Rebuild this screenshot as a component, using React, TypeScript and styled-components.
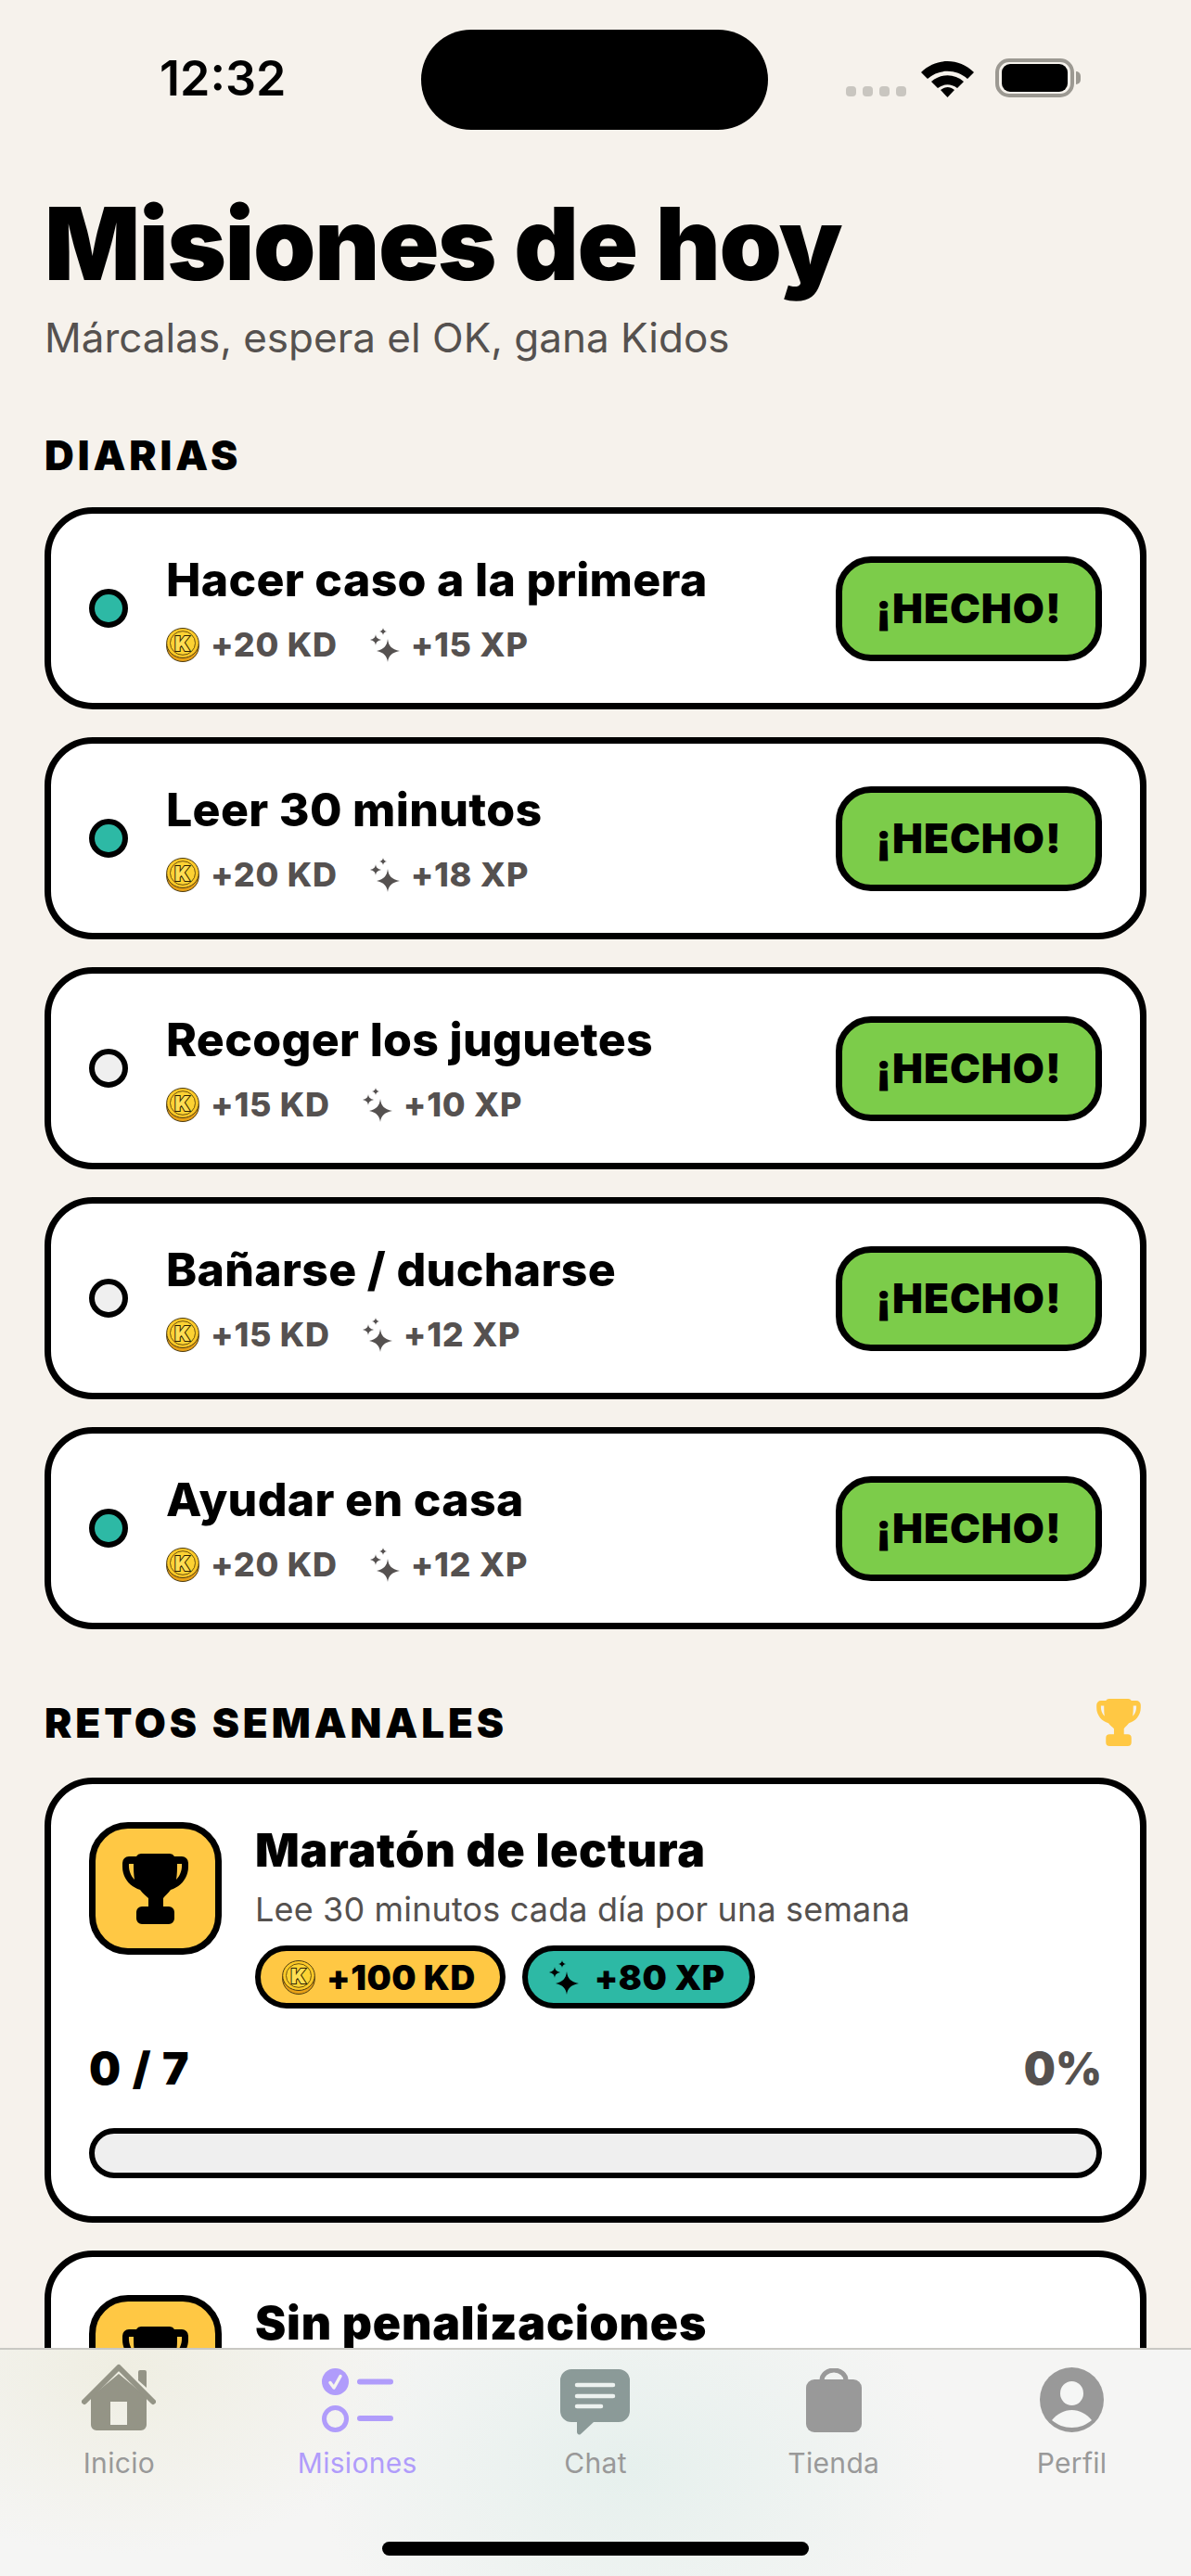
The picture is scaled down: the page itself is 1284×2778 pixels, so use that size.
import React from 'react'
import styled, { createGlobalStyle } from 'styled-components'

const font = `Inter, "Noto Sans", "Liberation Sans", sans-serif`

const missions = [
  { title: 'Hacer caso a la primera', kd: 20, xp: 15, done: true },
  { title: 'Leer 30 minutos', kd: 20, xp: 18, done: true },
  { title: 'Recoger los juguetes', kd: 15, xp: 10, done: false },
  { title: 'Bañarse / ducharse', kd: 15, xp: 12, done: false },
  { title: 'Ayudar en casa', kd: 20, xp: 12, done: true },
]

const Coin = () => (
  <CoinSvg viewBox="0 0 36 37">
    <ellipse cx="18" cy="20" rx="17.300" ry="16.500" fill="#e8a117" stroke="#4a3a12" strokeWidth="1" />
    <ellipse cx="18" cy="16.500" rx="17.300" ry="16" fill="#fdc927" stroke="#4a3a12" strokeWidth="1" />
    <ellipse cx="18" cy="16.500" rx="13.500" ry="12.800" fill="#fdd233" stroke="#6b5210" strokeWidth="1" />
    <text x="18" y="24.500" textAnchor="middle" fontFamily={font} fontSize="22" fontWeight="900" fill="#ffdf55" stroke="#2a1f05" strokeWidth="2" paintOrder="stroke">K</text>
  </CoinSvg>
)

const Sparkles = ({ color }: { color: string }) => (
  <SparkleSvg viewBox="0 0 32 37" fill={color}>
    <path d="M19 12c1 8 4 11 13 13-9 2-12 5-13 12-1-7-4-10-12-12 8-2 11-5 12-13z" />
    <path d="M6 7c.4 3.500 2 5 6 6-4 1-5.600 2.500-6 6-.4-3.500-2-5-6-6 4-1 5.600-2.500 6-6z" />
    <path d="M14 0c.3 2.300 1.300 3.300 4 4-2.700.7-3.700 1.700-4 4-.3-2.300-1.300-3.300-4-4 2.700-.7 3.700-1.700 4-4z" />
  </SparkleSvg>
)

const Trophy = ({ color, w, h }: { color: string; w: number; h: number }) => (
  <svg width={w} height={h} viewBox="0 0 71 76" fill={color}>
    <path
      fillRule="evenodd"
      d="M20 0H51a6 6 0 0 1 5 3H64a7 7 0 0 1 7 7V14C71 27 62 36 52 39 49 43 46 45 44 48V57H50a6 6 0 0 1 6 6V70a6 6 0 0 1-6 6H21a6 6 0 0 1-6-6V63a6 6 0 0 1 6-6H28V48C25 45 22 43 19 39 9 36 0 27 0 14V10a7 7 0 0 1 7-7H15a6 6 0 0 1 5-3ZM7 11C6.500 18 9 24 13 28 12 22 12 16 12 11ZM64 11C64.500 18 62 24 58 28 59 22 59 16 59 11Z"
    />
  </svg>
)

const HomeIcon = () => (
  <svg width="80" height="72" viewBox="0 0 80 72">
    <path d="M10 36 40 11 70 36V66a6 6 0 0 1-6 6H16a6 6 0 0 1-6-6Z M31 41V66H49V41Z" fill="#949486" fillRule="evenodd" />
    <path d="M3 41 40 4 77 41" fill="none" stroke="#949486" strokeWidth="6" strokeLinecap="round" strokeLinejoin="round" />
    <path d="M61 9a2 2 0 0 1 2-2h5a2 2 0 0 1 2 2V26L61 18Z" fill="#949486" />
  </svg>
)

const MissionIcon = () => (
  <svg width="77" height="69" viewBox="0 0 77 69">
    <circle cx="14.500" cy="14.500" r="14.500" fill="#b09cfb" />
    <path d="M9 15.500 13 21 20 8.500" fill="none" stroke="#f5f4ee" strokeWidth="3.500" strokeLinecap="round" strokeLinejoin="round" />
    <circle cx="14.500" cy="54.500" r="12" fill="none" stroke="#b09cfb" strokeWidth="5" />
    <path d="M41 14.500H74M41 54H74" stroke="#b09cfb" strokeWidth="6" strokeLinecap="round" />
  </svg>
)

const ChatIcon = () => (
  <svg width="75" height="71" viewBox="0 0 75 71">
    <path d="M12 0H63a12 12 0 0 1 12 12V45a12 12 0 0 1-12 12H36L22 70a2.500 2.500 0 0 1-4-2V57H12A12 12 0 0 1 0 45V12A12 12 0 0 1 12 0Z" fill="#8b9a98" />
    <path d="M18 17H57M18 29H57M18 40H44" stroke="#edf2f0" strokeWidth="4.500" strokeLinecap="round" />
  </svg>
)

const BagIcon = () => (
  <svg width="60" height="69" viewBox="0 0 60 69">
    <path d="M17 14V13a13 11 0 0 1 26 0V14" fill="none" stroke="#999" strokeWidth="5" />
    <rect x="0" y="12" width="60" height="57" rx="9" fill="#999" />
  </svg>
)

const ProfileIcon = () => (
  <svg width="69" height="70" viewBox="0 0 69 70">
    <ellipse cx="34.500" cy="35" rx="34.500" ry="35" fill="#999" />
    <ellipse cx="34.500" cy="28" rx="12.500" ry="13" fill="#f5f6f5" />
    <path d="M13 57C19 50 26 46 34.500 46S50 50 56 57C50 62 43 65 34.500 65S19 62 13 57Z" fill="#f5f6f5" />
  </svg>
)

const tabs = [
  { label: 'Inicio', icon: <HomeIcon />, offset: 0 },
  { label: 'Misiones', icon: <MissionIcon />, offset: 5, active: true },
  { label: 'Chat', icon: <ChatIcon />, offset: 6 },
  { label: 'Tienda', icon: <BagIcon />, offset: 5 },
  { label: 'Perfil', icon: <ProfileIcon />, offset: 4 },
]

const App = () => {
  return (
    <Phone>
      <GlobalStyle />
      <StatusBar>
        <Time>12:32</Time>
        <Island />
        <StatusIcons>
          <Dots>
            <Dot />
            <Dot />
            <Dot />
            <Dot />
          </Dots>
          <svg width="57" height="42" viewBox="0 0 57 42">
            <path d="M0 15C16-1 41-1 57 15L50 22C38 11 19 11 7 22Z" fill="#000" />
            <path d="M11 25C21 16 36 16 46 25L39 32C32 27 25 27 18 32Z" fill="#000" />
            <path d="M21 34C26 30 31 30 36 34L28.500 42Z" fill="#000" />
          </svg>
          <Battery>
            <BatteryFill />
            <BatteryNub />
          </Battery>
        </StatusIcons>
      </StatusBar>

      <Content>
        <Title>Misiones de hoy</Title>
        <Subtitle>Márcalas, espera el OK, gana Kidos</Subtitle>

        <SectionRow $top={75} $bottom={31}>
          <SectionTitle>DIARIAS</SectionTitle>
        </SectionRow>
        <MissionList>
          {missions.map((m) => (
            <MissionCard key={m.title}>
              <StatusDot $done={m.done} />
              <MissionText>
                <MissionTitle>{m.title}</MissionTitle>
                <Meta>
                  <MetaItem>
                    <Coin />
                    +{m.kd} KD
                  </MetaItem>
                  <MetaItem>
                    <Sparkles color="#555150" />
                    +{m.xp} XP
                  </MetaItem>
                </Meta>
              </MissionText>
              <DoneButton>¡HECHO!</DoneButton>
            </MissionCard>
          ))}
        </MissionList>

        <SectionRow $top={75} $bottom={34}>
          <SectionTitle>RETOS SEMANALES</SectionTitle>
          <Trophy color="#ffc844" w={48} h={51} />
        </SectionRow>
        <WeeklyList>
          <WeeklyCard>
            <WeeklyTop>
              <TrophyBox>
                <Trophy color="#000" w={71} h={76} />
              </TrophyBox>
              <WeeklyText>
                <WeeklyTitle>Maratón de lectura</WeeklyTitle>
                <WeeklySub>Lee 30 minutos cada día por una semana</WeeklySub>
                <Pills>
                  <Pill $bg="#ffc844" $gap={12}>
                    <Coin />
                    +100 KD
                  </Pill>
                  <Pill $bg="#2db9a5" $gap={17}>
                    <Sparkles color="#000" />
                    +80 XP
                  </Pill>
                </Pills>
              </WeeklyText>
            </WeeklyTop>
            <ProgressRow>
              <ProgressCount>0 / 7</ProgressCount>
              <ProgressPct>0%</ProgressPct>
            </ProgressRow>
            <ProgressBar />
          </WeeklyCard>
          <WeeklyCard>
            <WeeklyTop>
              <TrophyBox>
                <Trophy color="#000" w={71} h={76} />
              </TrophyBox>
              <WeeklyText>
                <WeeklyTitle>Sin penalizaciones</WeeklyTitle>
              </WeeklyText>
            </WeeklyTop>
          </WeeklyCard>
        </WeeklyList>
      </Content>

      <TabBar>
        {tabs.map((t) => (
          <Tab key={t.label}>
            <TabIcon $offset={t.offset}>{t.icon}</TabIcon>
            <TabLabel $active={t.active}>{t.label}</TabLabel>
          </Tab>
        ))}
        <HomeIndicator />
      </TabBar>
    </Phone>
  )
}

export default App

const GlobalStyle = createGlobalStyle`
html, body {
  margin: 0;
  padding: 0;
  background: #f6f2ec;
}
* {
  box-sizing: border-box;
}
`

const Phone = styled.div`
position: relative;
width: 1284px;
height: 2778px;
overflow: hidden;
background: #f6f2ec;
color: #000;
font-family: ${font};
`

const StatusBar = styled.div`
display: grid;
grid-template-columns: 282px 374px 1fr;
align-items: center;
height: 108px;
margin-top: 32px;
padding-left: 172px;
`

const Time = styled.div`
font-size: 52px;
font-weight: 600;
line-height: 60px;
margin-top: -2px;
`

const Island = styled.div`
height: 108px;
border-radius: 54px;
background: #000;
`

const StatusIcons = styled.div`
display: flex;
align-items: flex-start;
height: 42px;
margin-top: -4px;
padding-left: 84px;
`

const Dots = styled.div`
display: flex;
gap: 7px;
margin-top: 30px;
margin-right: 16px;
`

const Dot = styled.div`
width: 11px;
height: 11px;
border-radius: 4px;
background: #c9c6c0;
`

const Battery = styled.div`
position: relative;
width: 85px;
height: 42px;
margin-left: 23px;
padding: 2px 3px;
border: 4px solid #9c9992;
border-radius: 15px;
`

const BatteryFill = styled.div`
width: 100%;
height: 100%;
border-radius: 9px;
background: #000;
`

const BatteryNub = styled.div`
position: absolute;
top: 10px;
right: -11px;
width: 5px;
height: 14px;
border-radius: 0 5px 5px 0;
background: #9c9992;
`

const Content = styled.div`
padding: 63px 48px 0;
`

const Title = styled.h1`
margin: 0;
font-size: 108px;
font-weight: 900;
line-height: 120px;
letter-spacing: -1.400px;
`

const Subtitle = styled.p`
margin: 14px 0 0;
font-size: 44px;
font-weight: 400;
line-height: 54px;
color: #55514f;
`

const SectionRow = styled.div<{ $top: number; $bottom: number }>`
display: flex;
align-items: center;
justify-content: space-between;
margin: ${(p) => p.$top}px 6px ${(p) => p.$bottom}px 0;
`

const SectionTitle = styled.h2`
margin: 0;
font-size: 44px;
font-weight: 900;
line-height: 50px;
letter-spacing: 3.900px;
`

const MissionList = styled.div`
display: flex;
flex-direction: column;
gap: 30px;
`

const MissionCard = styled.div`
display: flex;
align-items: center;
gap: 41px;
height: 218px;
padding: 0 41px;
border: 7px solid #000;
border-radius: 52px;
background: #fff;
`

const StatusDot = styled.div<{ $done: boolean }>`
flex: none;
width: 42px;
height: 42px;
border: 6px solid #000;
border-radius: 50%;
background: ${(p) => (p.$done ? '#2db9a5' : '#efefef')};
`

const MissionText = styled.div`
flex: 1;
display: flex;
flex-direction: column;
gap: 21px;
padding-bottom: 1px;
`

const MissionTitle = styled.div`
font-size: 50px;
font-weight: 800;
line-height: 58px;
letter-spacing: 0.300px;
`

const Meta = styled.div`
display: flex;
align-items: center;
gap: 35px;
`

const MetaItem = styled.div`
display: flex;
align-items: center;
gap: 12px;
font-size: 36px;
font-weight: 800;
line-height: 40px;
letter-spacing: 0.700px;
color: #555150;
`

const CoinSvg = styled.svg`
flex: none;
width: 36px;
height: 37px;
`

const SparkleSvg = styled.svg`
flex: none;
width: 32px;
height: 37px;
`

const DoneButton = styled.button`
flex: none;
width: 287px;
height: 113px;
padding: 0;
border: 7px solid #000;
border-radius: 38px;
background: #7ccc4a;
color: #000;
font-family: ${font};
font-size: 44px;
font-weight: 900;
letter-spacing: 1px;
`

const WeeklyList = styled.div`
display: flex;
flex-direction: column;
gap: 30px;
`

const WeeklyCard = styled.div`
padding: 41px;
border: 7px solid #000;
border-radius: 52px;
background: #fff;
`

const WeeklyTop = styled.div`
display: flex;
gap: 36px;
`

const TrophyBox = styled.div`
flex: none;
display: flex;
align-items: center;
justify-content: center;
width: 143px;
height: 143px;
border: 7px solid #000;
border-radius: 42px;
background: #ffc844;
`

const WeeklyText = styled.div`
flex: 1;
display: flex;
flex-direction: column;
padding-top: 1px;
`

const WeeklyTitle = styled.div`
font-size: 50px;
font-weight: 900;
line-height: 58px;
letter-spacing: 0.800px;
`

const WeeklySub = styled.div`
margin-top: 14px;
font-size: 36px;
font-weight: 400;
line-height: 42px;
letter-spacing: 0.150px;
color: #55514f;
`

const Pills = styled.div`
display: flex;
gap: 18px;
margin-top: 18px;
`

const Pill = styled.div<{ $bg: string; $gap: number }>`
display: flex;
align-items: center;
gap: ${(p) => p.$gap}px;
height: 68px;
padding: 0 26px 0 23px;
border: 6px solid #000;
border-radius: 34px;
background: ${(p) => p.$bg};
font-size: 37px;
font-weight: 900;
letter-spacing: 0.500px;
`

const ProgressRow = styled.div`
display: flex;
align-items: center;
justify-content: space-between;
margin-top: 36px;
font-size: 48px;
font-weight: 900;
line-height: 58px;
`

const ProgressCount = styled.div`
letter-spacing: 1.500px;
`

const ProgressPct = styled.div`
color: #55514f;
`

const ProgressBar = styled.div`
height: 54px;
margin-top: 35px;
border: 6px solid #000;
border-radius: 27px;
background: #efefef;
`

const TabBar = styled.div`
position: absolute;
left: 0;
right: 0;
bottom: 0;
display: grid;
grid-template-columns: repeat(5, 1fr);
align-items: start;
height: 246px;
padding-top: 15px;
border-top: 2px solid #c9c8c3;
background:
  radial-gradient(ellipse 320px 200px at 130px 20px, #efeee2 0%, rgba(239, 238, 226, 0) 100%),
  radial-gradient(ellipse 340px 240px at 680px 130px, #e6f0ed 0%, rgba(230, 240, 237, 0) 100%),
  #f5f5f4;
`

const Tab = styled.div`
display: flex;
flex-direction: column;
align-items: center;
`

const TabIcon = styled.div<{ $offset: number }>`
display: flex;
align-items: flex-start;
justify-content: center;
height: 77px;
padding-top: ${(p) => p.$offset}px;
`

const TabLabel = styled.div<{ $active?: boolean }>`
margin-top: 12px;
font-size: 30px;
font-weight: 400;
line-height: 36px;
letter-spacing: 0.300px;
color: ${(p) => (p.$active ? '#b09cfb' : '#999')};
`

const HomeIndicator = styled.div`
position: absolute;
left: 412px;
bottom: 22px;
width: 460px;
height: 15px;
border-radius: 8px;
background: #000;
`
